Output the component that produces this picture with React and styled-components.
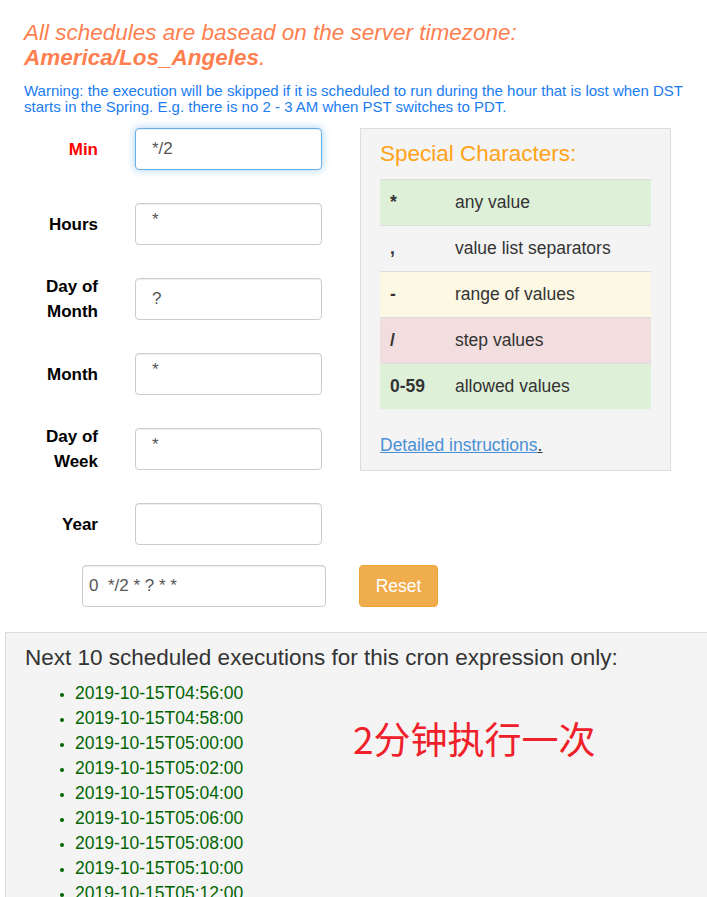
import React from "react";
import styled, { createGlobalStyle } from "styled-components";

const Global = createGlobalStyle`
  html, body { margin: 0; padding: 0; background: #fff; }
  body { font-family: "Liberation Sans", Arial, sans-serif; color: #333; }
  * { box-sizing: border-box; }
`;

const Page = styled.div`
  width: 707px;
  height: 897px;
  overflow: hidden;
  position: relative;
`;

const Top = styled.div`
  padding: 20px 0 0 24px;
`;

const Zone = styled.h2`
  margin: 0;
  font-size: 22.5px;
  line-height: 25px;
  font-weight: normal;
  font-style: italic;
  color: #ff7f50;
  b { font-weight: bold; }
`;

const Warning = styled.p`
  margin: 13px 0 0;
  font-size: 15px;
  line-height: 16px;
  color: #1a7cf0;
`;

const Main = styled.div`
  display: flex;
  gap: 38px;
  margin-top: 13px;
`;

const Form = styled.div`
  display: grid;
  grid-template-columns: 74px 187px;
  grid-auto-rows: 42px;
  column-gap: 37px;
  row-gap: 33px;
  align-items: center;
`;

const Label = styled.div`
  text-align: right;
  font-size: 17px;
  line-height: 25px;
  font-weight: bold;
  color: ${(p) => (p.$active ? "#ff0000" : "#000")};
`;

const Field = styled.div`
  height: 42px;
  border: 1px solid ${(p) => (p.$focus ? "#66afe9" : "#ccc")};
  border-radius: 4px;
  background: #fff;
  padding: 0 16px;
  display: flex;
  align-items: center;
  font-size: 17px;
  color: #555;
  box-shadow: ${(p) =>
    p.$focus
      ? "inset 0 1px 1px rgba(0,0,0,.075), 0 0 8px rgba(102,175,233,.6)"
      : "inset 0 1px 1px rgba(0,0,0,.075)"};
`;

const Star = styled.span`
  position: relative;
  top: -4px;
  font-size: 17px;
`;

const Panel = styled.div`
  width: 311px;
  height: 343px;
  background: #f4f4f4;
  border: 1px solid #ddd;
  padding: 12px 19px 0;
`;

const PanelTitle = styled.div`
  font-size: 22.5px;
  line-height: 26px;
  color: #ffa31a;
  margin-bottom: 12px;
`;

const Table = styled.div`
  width: 271px;
`;

const Row = styled.div`
  display: grid;
  grid-template-columns: 75px 1fr;
  height: 46px;
  align-items: center;
  border-top: 1px solid #ddd;
  background: ${(p) => p.$bg || "transparent"};
  font-size: 17.5px;
  color: #333;
`;

const Sym = styled.div`
  padding-left: 10px;
  font-weight: bold;
`;

const Link = styled.div`
  margin-top: 26px;
  font-size: 17.5px;
  a { color: #4a8fd6; text-decoration: underline; }
  span { color: #333; text-decoration: underline; }
`;

const CronRow = styled.div`
  display: flex;
  align-items: center;
  gap: 33px;
  margin: 20px 0 0 82px;
`;

const CronField = styled(Field)`
  width: 244px;
  padding: 0 6px;
  color: #555;
  white-space: pre;
`;

const Reset = styled.button`
  width: 79px;
  height: 42px;
  border: 1px solid #eea236;
  border-radius: 4px;
  background: #f0ad4e;
  color: #fff;
  font-family: inherit;
  font-size: 17.5px;
  padding: 0;
`;

const Results = styled.div`
  position: relative;
  margin: 25px 0 0 5px;
  background: #f4f4f4;
  border-top: 1px solid #ddd;
  border-left: 1px solid #ddd;
  padding: 12px 0 0 19px;
  height: 300px;
`;

const ResultsTitle = styled.div`
  font-size: 22.5px;
  line-height: 26px;
  color: #333;
`;

const List = styled.ul`
  margin: 10px 0 0;
  padding-left: 50px;
  list-style: disc;
  li {
    font-size: 17.5px;
    line-height: 25px;
    color: #006400;
  }
  li::marker { font-size: 14px; }
`;

const Note = styled.div`
  position: absolute;
  left: 347px;
  top: 80px;
  font-family: "Noto Sans CJK SC", sans-serif;
  font-size: 37px;
  line-height: 50px;
  color: #f0202a;
`;

const labels = [
  { l: "Min", v: "*/2", active: true },
  { l: "Hours", v: "*" },
  { l: ["Day of", "Month"], v: "?" },
  { l: "Month", v: "*" },
  { l: ["Day of", "Week"], v: "*" },
  { l: "Year", v: "" },
];

const chars = [
  ["*", "any value", "#dff0d8"],
  [",", "value list separators", ""],
  ["-", "range of values", "#fcf8e3"],
  ["/", "step values", "#f2dede"],
  ["0-59", "allowed values", "#dff0d8"],
];

const times = [
  "2019-10-15T04:56:00",
  "2019-10-15T04:58:00",
  "2019-10-15T05:00:00",
  "2019-10-15T05:02:00",
  "2019-10-15T05:04:00",
  "2019-10-15T05:06:00",
  "2019-10-15T05:08:00",
  "2019-10-15T05:10:00",
  "2019-10-15T05:12:00",
  "2019-10-15T05:14:00",
];

export default function App() {
  return (
    <Page>
      <Global />
      <Top>
        <Zone>
          All schedules are basead on the server timezone:
          <br />
          <b>America/Los_Angeles</b>.
        </Zone>
        <Warning>
          Warning: the execution will be skipped if it is scheduled to run during the hour that is lost when DST
          <br />
          starts in the Spring. E.g. there is no 2 - 3 AM when PST switches to PDT.
        </Warning>
        <Main>
          <Form>
            {labels.map((r, i) => (
              <React.Fragment key={i}>
                <Label $active={r.active}>
                  {Array.isArray(r.l) ? (
                    <>
                      {r.l[0]}
                      <br />
                      {r.l[1]}
                    </>
                  ) : (
                    r.l
                  )}
                </Label>
                <Field $focus={r.active}>
                  {r.v === "*" ? <Star>*</Star> : r.v}
                </Field>
              </React.Fragment>
            ))}
          </Form>
          <Panel>
            <PanelTitle>Special Characters:</PanelTitle>
            <Table>
              {chars.map(([s, d, bg]) => (
                <Row key={s} $bg={bg}>
                  <Sym>{s}</Sym>
                  <div>{d}</div>
                </Row>
              ))}
            </Table>
            <Link>
              <a>Detailed instructions</a>
              <span>.</span>
            </Link>
          </Panel>
        </Main>
      </Top>
      <CronRow>
        <CronField>{"0  */2 * ? * *"}</CronField>
        <Reset>Reset</Reset>
      </CronRow>
      <Results>
        <ResultsTitle>Next 10 scheduled executions for this cron expression only:</ResultsTitle>
        <List>
          {times.map((t) => (
            <li key={t}>{t}</li>
          ))}
        </List>
        <Note>2分钟执行一次</Note>
      </Results>
    </Page>
  );
}
